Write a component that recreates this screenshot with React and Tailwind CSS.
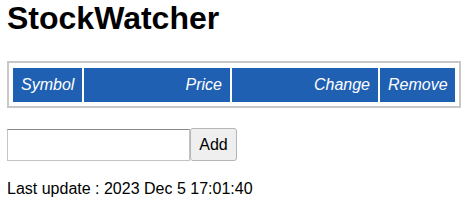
import React, {useState} from 'react';

const columns = [
  {label: 'Symbol', width: 'w-[69px]', align: 'justify-start'},
  {label: 'Price', width: 'w-[146px]', align: 'justify-end'},
  {label: 'Change', width: 'w-[146px]', align: 'justify-end'},
  {label: 'Remove', width: 'w-[75px]', align: 'justify-start'},
];

export default function App() {
  const [symbol, setSymbol] = useState('');

  return (
    <div className="px-[7px] font-['Liberation_Sans',Arial,sans-serif] text-black">
      <h1 className="text-[32px] font-bold leading-[37px]">StockWatcher</h1>

      <div className="mt-[24px] w-[454px] border-2 border-[#c8c8c8] pt-[5px] pb-[4px] pl-[4px] pr-[3px]">
        <div className="flex gap-[2px]">
          {columns.map((col) => (
            <div
              key={col.label}
              className={`flex h-[34px] items-center px-[8px] bg-[#1f60b3] text-[16px] italic text-white ${col.width} ${col.align}`}
            >
              {col.label}
            </div>
          ))}
        </div>
      </div>

      <div className="mt-[20px] flex items-end">
        <input
          type="text"
          value={symbol}
          onChange={(e) => setSymbol(e.target.value)}
          className="h-[32px] w-[183px] border border-[#c4c4c4] border-t-[#8a8a8a] bg-white px-1 text-[16px] outline-none"
        />
        <button className="h-[33px] w-[47px] rounded-[3px] border border-[#b5b5b5] bg-[#efefef] text-[16px] leading-none">
          Add
        </button>
      </div>

      <div className="mt-[19px] text-[16px] leading-[18px]">
        Last update : 2023 Dec 5 17:01:40
      </div>
    </div>
  );
}
